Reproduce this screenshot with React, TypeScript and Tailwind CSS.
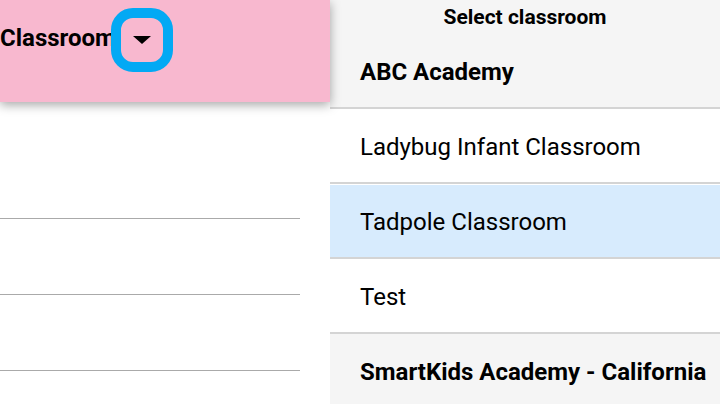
export default function App() {
  const rows = [
    { name: 'Ladybug Infant Classroom', kind: 'item' },
    { name: 'Tadpole Classroom', kind: 'selected' },
    { name: 'Test', kind: 'item' },
    { name: 'SmartKids Academy - California', kind: 'group' },
  ];

  return (
    <div className="flex h-[404px] w-[720px] overflow-hidden bg-white text-black" style={{ fontFamily: 'Roboto, "Liberation Sans", sans-serif' }}>
      {/* left page behind the picker */}
      <div className="flex w-[330px] shrink-0 flex-col">
        <div className="relative z-10 flex h-[102px] items-start bg-[#f8b8cf] shadow-[0_3px_10px_rgba(0,0,0,0.35)]">
          <div className="mt-[8px] flex items-center">
            <span className="mt-[-4px] whitespace-nowrap text-[24px] font-bold leading-none">Classroom</span>
            <button className="ml-[-5px] flex h-[64px] w-[62px] items-center justify-center rounded-[22px] border-[10px] border-[#03a9f4]">
              <span className="h-0 w-0 border-x-[9px] border-t-[8px] border-x-transparent border-t-black" />
            </button>
          </div>
        </div>
        <div className="w-[300px]">
          <div className="h-[117px] border-b border-[#aaaaaa]" />
          <div className="h-[76px] border-b border-[#aaaaaa]" />
          <div className="h-[76px] border-b border-[#aaaaaa]" />
        </div>
      </div>

      {/* picker */}
      <div className="flex flex-1 flex-col">
        <div className="border-b-2 border-[#d4d4d4] bg-[#f5f5f5]">
          <div className="flex h-[34px] items-center justify-center text-[21px] font-bold leading-none">Select classroom</div>
          <div className="flex h-[73px] items-center pl-[30px] pt-[2px] text-[24px] font-bold leading-none">ABC Academy</div>
        </div>
        {rows.map((r, i) => (
          <div key={i} className={i < rows.length - 1 ? 'border-b-2 border-[#d4d4d4]' : ''}>
            {r.kind === 'selected' ? (
              <div className="mt-px flex h-[72px] items-center bg-[#d7ebfd] pl-[30px] pt-px text-[24px] leading-none">{r.name}</div>
            ) : (
              <div className={`flex h-[73px] items-center pl-[30px] pt-[2px] text-[24px] leading-none ${r.kind === 'group' ? 'bg-[#f5f5f5] font-bold' : ''}`}>{r.name}</div>
            )}
          </div>
        ))}
      </div>
    </div>
  );
}
